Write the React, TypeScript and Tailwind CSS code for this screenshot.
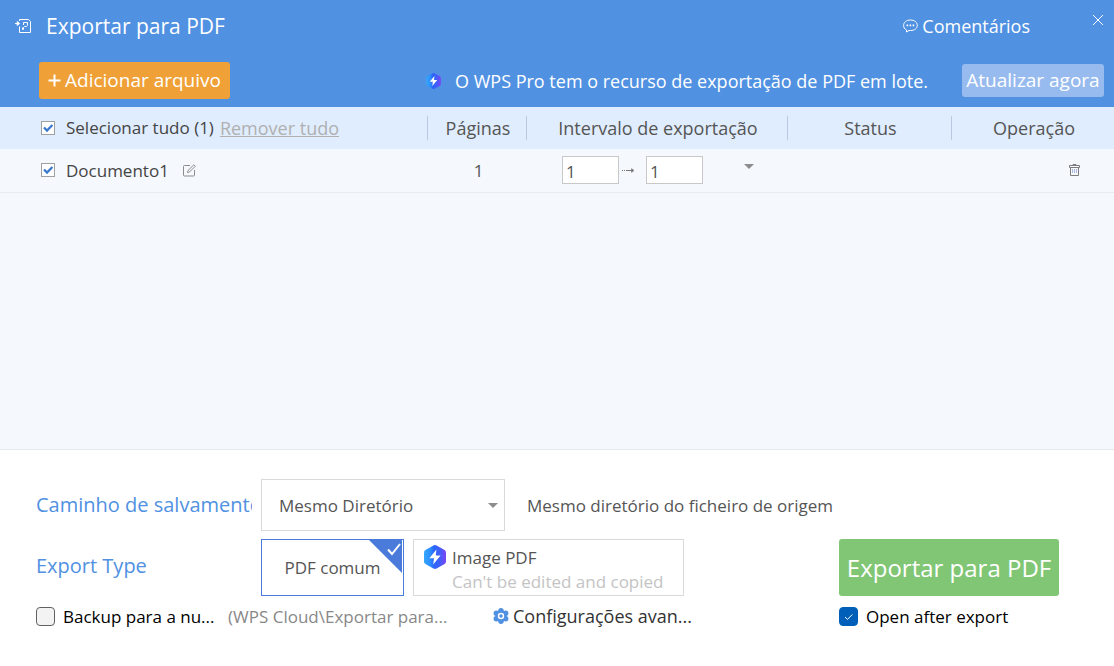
import { useState } from "react"

interface TickBoxProps {
  id: string
  checked: boolean
  onChange: (checked: boolean) => void
}

// Small square tick box used in the file list
function ListTickBox({ id, checked, onChange }: TickBoxProps) {
  return (
    <span className="relative block h-[14px] w-[14px] shrink-0">
      <input
        id={id}
        type="checkbox"
        checked={checked}
        onChange={(e) => onChange(e.target.checked)}
        className="block h-[14px] w-[14px] appearance-none border border-[#a0a0a0] bg-white"
      />
      {checked && (
        <svg viewBox="0 0 14 14" className="pointer-events-none absolute inset-0 h-[14px] w-[14px]" fill="none" stroke="#3a78cf" strokeWidth="2.2">
          <path d="M3 6.4 L6 9.6 L11.4 4" />
        </svg>
      )}
    </span>
  )
}

// Rounded tick box used in the footer options
function OptionTickBox({ id, checked, onChange }: TickBoxProps) {
  return (
    <span className="relative block h-[19px] w-[19px] shrink-0">
      <input
        id={id}
        type="checkbox"
        checked={checked}
        onChange={(e) => onChange(e.target.checked)}
        className="block h-[19px] w-[19px] appearance-none rounded border border-[#616161] bg-[#f3f3f3] checked:border-[#005fb8] checked:bg-[#005fb8]"
      />
      {checked && (
        <svg viewBox="0 0 19 19" className="pointer-events-none absolute inset-0 h-[19px] w-[19px]" fill="none" stroke="#fff" strokeWidth="1">
          <path d="M6 10 L8.5 12.4 L13.4 7.4" />
        </svg>
      )}
    </span>
  )
}

function ProBadge({ id, className }: { id: string; className: string }) {
  return (
    <svg viewBox="0 0 22 24" className={className} aria-hidden="true">
      <defs>
        <linearGradient id={id} x1="0" y1="0" x2="1" y2="0">
          <stop offset="0" stopColor="#35a8ff" />
          <stop offset="0.3" stopColor="#2c8cff" />
          <stop offset="0.45" stopColor="#2a66fb" />
          <stop offset="0.7" stopColor="#3f5ffb" />
          <stop offset="1" stopColor="#7a45f5" />
        </linearGradient>
      </defs>
      <path
        d="M9.4 0.5 Q11 -0.3 12.6 0.5 L20.6 5 Q22 5.9 22 7.5 V16.5 Q22 18.1 20.6 19 L12.6 23.5 Q11 24.3 9.4 23.5 L1.4 19 Q0 18.1 0 16.5 V7.5 Q0 5.9 1.4 5 Z"
        fill={`url(#${id})`}
      />
      <path d="M12.4 4.6 L5.4 13.2 H10 L9.2 19.4 L16.6 10.6 H11.8 Z" fill="#fff" />
    </svg>
  )
}

function PdfExportIcon() {
  return (
    <svg viewBox="0 0 17 14" className="h-[14px] w-[17px]" fill="none" stroke="#fff" strokeWidth="1" aria-hidden="true">
      <path d="M4.5 2 V0.5 H13.5 L15.5 2.5 V13.5 H4.5 V7.5" />
      <path d="M0 4.5 H3" />
      <path d="M2.2 2.6 L4.6 4.5 L2.2 6.4 Z" fill="#fff" />
      <path d="M8.5 6 V3.5 H12.5 V6.5 L11.5 7.5 H9.5 L8.5 8.5 V10.5 H7.5 V8.5" />
    </svg>
  )
}

function CommentIcon() {
  return (
    <svg viewBox="0 0 15 14" className="h-[14px] w-[15px]" fill="none" stroke="#fff" strokeWidth="1" aria-hidden="true">
      <path d="M3.5 13 V11 C1.6 10 0.6 8.5 0.6 6.5 C0.6 3.4 3.2 1 7.4 1 C11.6 1 14.3 3.4 14.3 6.3 C14.3 9.4 11.6 11.5 7.6 11.5 H6 Z" />
      <path d="M3.6 6.4 H5.2 M6.6 6.4 H8.2 M9.6 6.4 H11.2" strokeWidth="1.6" />
    </svg>
  )
}

function EditIcon() {
  return (
    <svg viewBox="0 0 13 13" className="h-[13px] w-[13px]" fill="none" stroke="#8c8c8c" strokeWidth="1" aria-hidden="true">
      <path d="M7 1.5 H1.5 Q0.5 1.5 0.5 2.5 V11 Q0.5 12 1.5 12 H10.5 Q11.5 12 11.5 11 V6" />
      <path d="M4.5 8.5 L5 6.5 L10.8 0.8 L12.3 2.2 L6.5 8 Z" />
    </svg>
  )
}

function TrashIcon() {
  return (
    <svg viewBox="0 0 11 12" className="h-3 w-[11px]" fill="none" stroke="#7d7d7d" strokeWidth="1" aria-hidden="true">
      <path d="M4 1.5 V0.5 H7 V1.5 M0.5 3.5 V1.5 H10.5 V3.5 H0.5 M1.5 3.5 V11.5 H9.5 V3.5" />
      <path d="M3.5 5 V9 M5.5 5 V9 M7.5 5 V9" stroke="#a9b8dc" />
    </svg>
  )
}

function Caret() {
  return (
    <svg viewBox="0 0 10 5" className="h-[5px] w-[10px]" fill="#8c8c8c" aria-hidden="true">
      <path d="M0 0 H10 L5 5 Z" />
    </svg>
  )
}

function GearIcon() {
  return (
    <svg viewBox="0 0 16 16" className="h-4 w-4 shrink-0" fill="#5091e2" aria-hidden="true">
      <circle cx="8" cy="8" r="6" />
      <circle cx="8" cy="2.8" r="2.7" />
      <circle cx="12.7" cy="5.3" r="2.7" />
      <circle cx="12.7" cy="10.7" r="2.7" />
      <circle cx="8" cy="13.2" r="2.7" />
      <circle cx="3.3" cy="10.7" r="2.7" />
      <circle cx="3.3" cy="5.3" r="2.7" />
      <circle cx="8" cy="8" r="2.5" fill="none" stroke="#fff" strokeWidth="1.4" />
    </svg>
  )
}

const columns = [
  { title: "Páginas", width: "w-[99px]" },
  { title: "Intervalo de exportação", width: "w-[261px]" },
  { title: "Status", width: "w-[164px]" },
  { title: "Operação", width: "w-[163px]" },
]

export default function App() {
  const [selected, setSelected] = useState(true)
  const [backup, setBackup] = useState(false)
  const [openAfter, setOpenAfter] = useState(true)
  const [exportType, setExportType] = useState("pdf")
  const [from, setFrom] = useState("1")
  const [to, setTo] = useState("1")

  return (
    <div className="flex min-h-screen flex-col bg-white font-['Open_Sans','Noto_Sans',sans-serif] text-[#555]">
      <header className="bg-[#5091e2] pb-2 text-white">
        <div className="flex h-[52px] items-center pl-[15px]">
          <PdfExportIcon />
          <h1 className="ml-[14px] text-[21px] leading-7">Exportar para PDF</h1>
          <a href="#comentarios" className="ml-auto flex items-center gap-1 text-lg">
            <CommentIcon />
            Comentários
          </a>
          <button type="button" aria-label="Fechar" className="mr-[10px] ml-[62px] self-start pt-[14px]">
            <svg viewBox="0 0 12 12" className="h-3 w-3" stroke="#fff" strokeWidth="1">
              <path d="M1 1 L11 11 M11 1 L1 11" />
            </svg>
          </button>
        </div>
        <div className="flex h-[47px] items-center pt-[10px] pr-[10px] pl-[39px]">
          <button type="button" className="flex h-[37px] w-[191px] items-center justify-center gap-1 rounded-[3px] bg-[#efa036] pb-px text-[19px]">
            <svg viewBox="0 0 13 13" className="h-[13px] w-[13px]" stroke="#fff" strokeWidth="2">
              <path d="M6.5 0.5 V12.5 M0.5 6.5 H12.5" />
            </svg>
            Adicionar arquivo
          </button>
          <ProBadge id="pro-small" className="ml-auto h-4 w-[15px]" />
          <p className="ml-[14px] w-[485px] text-lg">O WPS Pro tem o recurso de exportação de PDF em lote.</p>
          <button type="button" className="ml-[22px] h-[33px] w-[142px] rounded-[3px] bg-[#97bbee] pb-px text-[19px]">
            Atualizar agora
          </button>
        </div>
      </header>

      <main className="flex-1 border-b border-[#e6e9ee] bg-[#f5f8fd]">
        <table className="w-full table-fixed">
          <thead>
            <tr className="h-[42px] bg-[#e0edfe]">
              <th className="p-0 font-normal">
                <div className="flex items-center pl-[41px] text-[17px] text-[#444]">
                  <ListTickBox id="select-all" checked={selected} onChange={setSelected} />
                  <label htmlFor="select-all" className="ml-[11px]">
                    Selecionar tudo (1)
                  </label>
                  <button type="button" className="ml-[6px] text-lg text-[#b0b0b0] underline">
                    Remover tudo
                  </button>
                </div>
              </th>
              {columns.map((column) => (
                <th key={column.title} className={`${column.width} p-0 font-normal`}>
                  <div className="h-6 border-l border-[#b9c8de] pl-[2px] text-lg leading-6">{column.title}</div>
                </th>
              ))}
            </tr>
          </thead>
          <tbody>
            <tr className="h-[43px] border-b border-[#e8ebf0]">
              <td className="p-0">
                <div className="flex items-center pl-[41px] text-[17px] text-[#444]">
                  <ListTickBox id="document-1" checked={selected} onChange={setSelected} />
                  <label htmlFor="document-1" className="ml-[11px]">
                    Documento1
                  </label>
                  <button type="button" aria-label="Renomear" className="ml-[14px]">
                    <EditIcon />
                  </button>
                </div>
              </td>
              <td className="p-0 pl-1 text-center text-[17px]">1</td>
              <td className="p-0">
                <div className="flex items-center pl-9">
                  <input
                    aria-label="Da página"
                    value={from}
                    onChange={(e) => setFrom(e.target.value)}
                    className="h-7 w-[57px] border border-[#c8c8c8] bg-white pt-[2px] pl-[3px] text-[17px]"
                  />
                  <svg viewBox="0 0 13 7" className="mr-[11px] ml-[3px] h-[7px] w-[13px]" stroke="#777" aria-hidden="true">
                    <path d="M0 3.5 H1 M2 3.5 H3 M4 3.5 H10" />
                    <path d="M9.5 1.5 L12 3.5 L9.5 5.5 Z" fill="#777" strokeWidth="0.5" />
                  </svg>
                  <input
                    aria-label="Até a página"
                    value={to}
                    onChange={(e) => setTo(e.target.value)}
                    className="h-7 w-[57px] border border-[#c8c8c8] bg-white pt-[2px] pl-[3px] text-[17px]"
                  />
                  <button type="button" aria-label="Opções de intervalo" className="ml-[41px] pb-2">
                    <Caret />
                  </button>
                </div>
              </td>
              <td className="p-0" />
              <td className="p-0 pr-[34px]">
                <button type="button" aria-label="Excluir" className="ml-auto block">
                  <TrashIcon />
                </button>
              </td>
            </tr>
          </tbody>
        </table>
      </main>

      <footer className="flex flex-col pt-[29px] pr-[55px] pb-[38px] pl-9">
        <div className="flex h-[52px] items-center gap-[9px]">
          <label htmlFor="save-path" className="w-[216px] shrink-0 overflow-hidden text-xl whitespace-nowrap text-[#5091e2]">
            Caminho de salvamento
          </label>
          <div className="relative">
            <select id="save-path" className="h-[52px] w-[244px] appearance-none border border-[#d9d9d9] bg-white px-[17px] pt-px text-[17px]">
              <option>Mesmo Diretório</option>
            </select>
            <span className="pointer-events-none absolute top-6 right-[7px]">
              <Caret />
            </span>
          </div>
          <p className="ml-[13px] pt-px text-[17px]">Mesmo diretório do ficheiro de origem</p>
        </div>

        <div className="mt-2 flex h-[57px] items-center gap-[9px]">
          <span id="export-type" className="w-[216px] shrink-0 pb-1 text-xl text-[#5091e2]">
            Export Type
          </span>
          <div role="radiogroup" aria-labelledby="export-type" className="flex gap-[9px]">
            <label className="relative flex h-[57px] w-[143px] items-center justify-center border border-[#d9d9d9] pt-px text-[17px] has-checked:border-[#4a7bdb]">
              <input
                type="radio"
                name="export-type"
                className="sr-only"
                checked={exportType === "pdf"}
                onChange={() => setExportType("pdf")}
              />
              PDF comum
              {exportType === "pdf" && (
                <svg viewBox="0 0 33 33" className="absolute top-0 right-px h-[33px] w-[33px]" aria-hidden="true">
                  <path d="M0 0 H33 V33 Z" fill="#4a7bdb" />
                  <path d="M19 9.5 L23 14 L31 4" fill="none" stroke="#fff" strokeWidth="2" />
                </svg>
              )}
            </label>
            <label className="flex h-[57px] w-[271px] gap-[6px] border border-[#d9d9d9] pt-[5px] pl-[10px] text-[17px] leading-6 has-checked:border-[#4a7bdb]">
              <input
                type="radio"
                name="export-type"
                className="sr-only"
                checked={exportType === "image"}
                onChange={() => setExportType("image")}
              />
              <ProBadge id="pro-large" className="h-6 w-[22px] shrink-0" />
              <span className="flex flex-col pt-px">
                <span>Image PDF</span>
                <span className="text-[#c4c4c4]">Can't be edited and copied</span>
              </span>
            </label>
          </div>
          <button type="button" className="ml-auto h-[57px] w-[220px] rounded-[3px] bg-[#80c675] text-2xl text-white">
            Exportar para PDF
          </button>
        </div>

        <div className="mt-2 flex h-6 items-center text-[17px]">
          <OptionTickBox id="backup" checked={backup} onChange={setBackup} />
          <label htmlFor="backup" className="ml-2 w-[165px] pt-px text-black">
            Backup para a nu...
          </label>
          <span className="w-[265px] pt-px text-[#888]">(WPS Cloud\Exportar para...</span>
          <button type="button" className="flex items-center gap-1 text-lg text-[#333]">
            <GearIcon />
            Configurações avan...
          </button>
          <div className="ml-auto flex w-[220px] items-center">
            <OptionTickBox id="open-after" checked={openAfter} onChange={setOpenAfter} />
            <label htmlFor="open-after" className="ml-2 pt-px text-black">
              Open after export
            </label>
          </div>
        </div>
      </footer>
    </div>
  )
}
